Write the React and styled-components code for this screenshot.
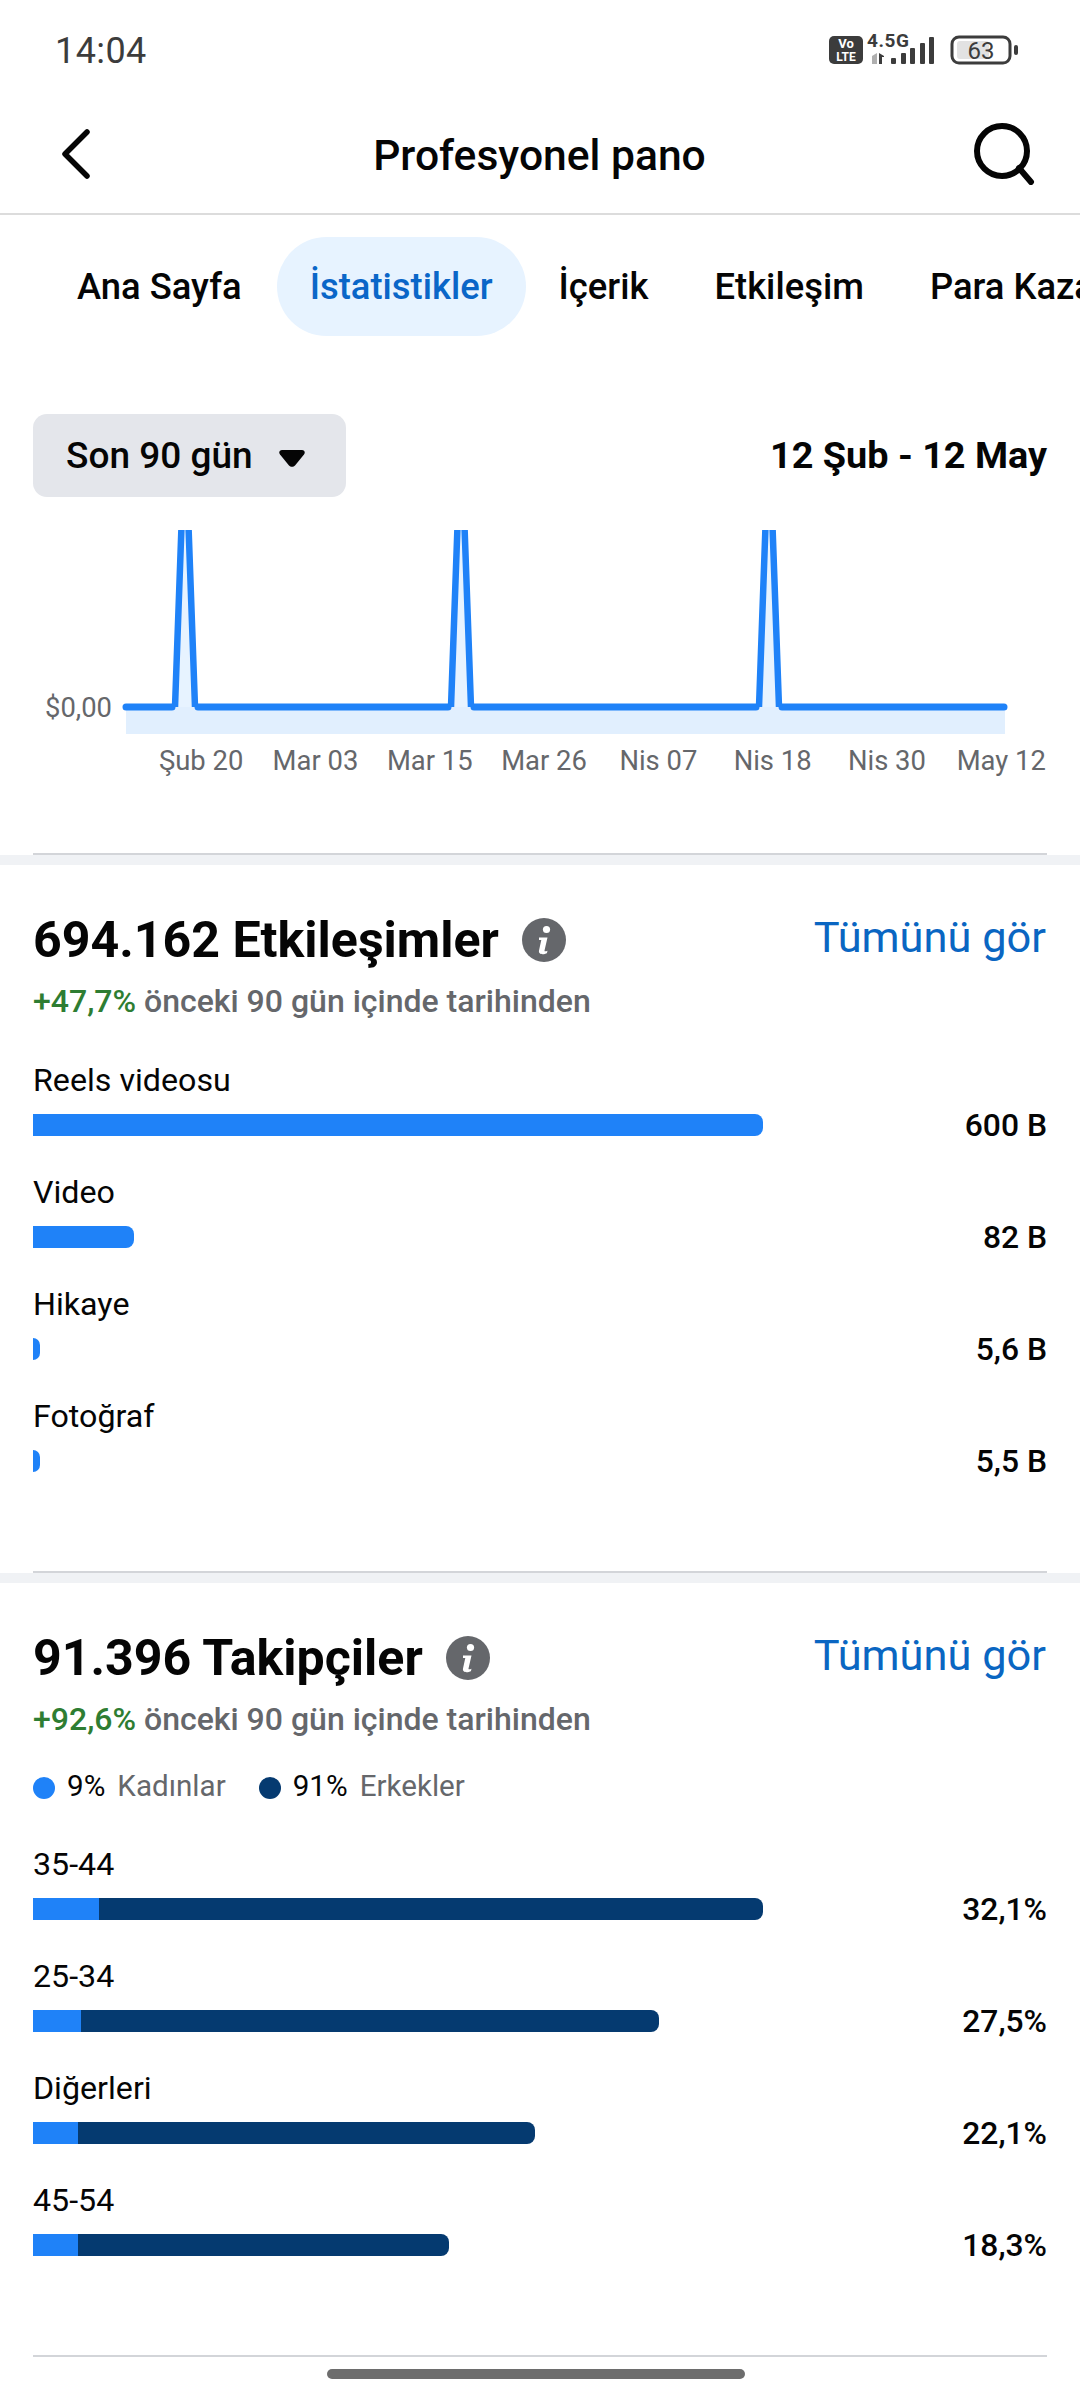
import React from 'react';
import styled, { createGlobalStyle } from 'styled-components';

const GlobalStyle = createGlobalStyle`
  html, body { margin: 0; padding: 0; background: #fff; }
  body { font-family: Roboto, "Noto Sans", sans-serif; color: #050505; }
`

const Page = styled.div`
  width: 1080px;
  height: 2400px;
  overflow: hidden;
  background: #fff;
`
const StatusBar = styled.div`
  height: 94px;
  box-sizing: border-box;
  padding: 0 60px 0 55px;
  display: flex;
  justify-content: space-between;
  align-items: flex-start;
`
const Time = styled.span`
  font-size: 36px;
  line-height: 42px;
  margin-top: 30px;
  letter-spacing: 0.4px;
  color: #3c3c3c;
`
const StatusIcons = styled.div`
  display: flex;
  margin-top: 30px;
`
const Header = styled.div`
  height: 121px;
  box-sizing: border-box;
  border-bottom: 2px solid #dcdcdc;
  padding: 0 44px 0 56px;
  display: flex;
  justify-content: space-between;
  align-items: center;
`
const HeaderTitle = styled.h1`
  margin: 3px 0 0 15px;
  font-size: 42.6px;
  font-weight: 500;
  line-height: 48px;
  color: #050505;
`
const Tabs = styled.div`
  display: flex;
  padding: 22px 0 0 44px;
  overflow: hidden;
  white-space: nowrap;
`
const Tab = styled.div`
  flex: none;
  height: 99px;
  line-height: 99px;
  padding: 0 33px;
  margin-right: ${p => (p.$first ? '2px' : '0')};
  border-radius: 50px;
  font-size: 36.4px;
  font-weight: 500;
  background: ${p => (p.$active ? '#e7f3ff' : 'transparent')};
  color: ${p => (p.$active ? '#0a66c8' : '#050505')};
`
const RangeRow = styled.div`
  margin-top: 78px;
  padding: 0 33px;
  display: flex;
  justify-content: space-between;
  align-items: center;
`
const RangeButton = styled.div`
  width: 313px;
  height: 83px;
  box-sizing: border-box;
  padding-left: 33px;
  border-radius: 14px;
  background: #e4e6eb;
  display: flex;
  align-items: center;
  gap: 26px;
  font-size: 37px;
  font-weight: 500;
`
const Caret = styled.svg`
  display: block;
  margin-top: 5px;
`
const RangeDates = styled.span`
  font-size: 37.8px;
  font-weight: 700;
  margin-top: -2px;
`
const ChartSvg = styled.svg`
  display: block;
  margin-top: 33px;
`
const TickRow = styled.div`
  display: grid;
  grid-template-columns: repeat(8, 114.3px);
  padding-left: 144px;
  margin-top: 9px;
`
const Tick = styled.span`
  text-align: center;
  font-size: 27.4px;
  line-height: 36px;
  color: #65676b;
`
const ChartBlock = styled.section`
  padding-bottom: 74px;
`
const Rule = styled.div`
  height: 2px;
  margin: 0 33px;
  background: #d3d5d9;
`
const Band = styled.div`
  height: 10px;
  background: #f0f2f5;
`
const Section = styled.section`
  padding: 47px 33px 99px;
`
const TitleRow = styled.div`
  display: flex;
  align-items: flex-start;
`
const SectionTitle = styled.h2`
  margin: 0;
  font-size: 50.1px;
  font-weight: 700;
  line-height: 56px;
  color: #050505;
`
const InfoIcon = styled.svg`
  display: block;
  margin: 6px 0 0 23px;
`
const SeeAll = styled.a`
  margin: 2px 1px 0 auto;
  font-size: 43.4px;
  line-height: 48px;
  color: #0a66c2;
`
const Subtitle = styled.div`
  margin-top: 13px;
  font-size: 32px;
  font-weight: 500;
  line-height: 40px;
  color: #65676b;
`
const Growth = styled.span`
  color: #2e7d32;
`
const Legend = styled.div`
  margin-top: 27px;
  height: 39px;
  display: flex;
  gap: 33px;
  font-size: 29.6px;
  line-height: 40px;
`
const LegendItem = styled.div`
  display: flex;
  align-items: center;
`
const Dot = styled.span`
  width: 22px;
  height: 22px;
  border-radius: 50%;
  margin: 5px 12px 0 0;
  background: ${p => p.$color};
`
const LegendValue = styled.span`
  color: #050505;
  margin-right: 12px;
`
const LegendName = styled.span`
  color: #65676b;
`
const Rows = styled.div`
  margin-top: 38px;
  display: flex;
  flex-direction: column;
  gap: 35px;
`
const RowLabel = styled.div`
  font-size: 32.2px;
  line-height: 42px;
  margin-bottom: 13px;
`
const BarLine = styled.div`
  height: 22px;
  display: flex;
  justify-content: space-between;
  align-items: center;
`
const Bar = styled.div`
  height: 22px;
  display: flex;
  overflow: hidden;
  border-radius: 0 8px 8px 0;
  background: ${p => p.$color};
`
const BarPart = styled.div`
  height: 100%;
  background: ${p => p.$color};
`
const RowValue = styled.span`
  font-size: 31.8px;
  line-height: 22px;
  font-weight: 500;
`
const HomeIndicator = styled.div`
  width: 418px;
  height: 10px;
  margin: 12px 0 0 327px;
  border-radius: 5px;
  background: #6d6d6d;
`

const BLUE = '#1f82f8'
const NAVY = '#053a70'
const FULL_BAR = 730

const interactions = [
  { label: 'Reels videosu', value: '600 B', width: 1 },
  { label: 'Video', value: '82 B', width: 0.138 },
  { label: 'Hikaye', value: '5,6 B', width: 0.0096 },
  { label: 'Fotoğraf', value: '5,5 B', width: 0.0096 },
]
const followers = [
  { label: '35-44', value: '32,1%', width: 1, women: 66 },
  { label: '25-34', value: '27,5%', width: 0.858, women: 48 },
  { label: 'Diğerleri', value: '22,1%', width: 0.688, women: 45 },
  { label: '45-54', value: '18,3%', width: 0.57, women: 45 },
]
const ticks = ['Şub 20', 'Mar 03', 'Mar 15', 'Mar 26', 'Nis 07', 'Nis 18', 'Nis 30', 'May 12']
const tabs = ['Ana Sayfa', 'İstatistikler', 'İçerik', 'Etkileşim', 'Para Kazan']
const spikes = [185, 461, 769]

const NetworkGlyph = () => (
  <svg width="121" height="36" viewBox="0 0 121 36">
    <rect x="0" y="6" width="34" height="28" rx="5" fill="#3c3c3c" />
    <text x="17" y="18" textAnchor="middle" fontSize="13" fontWeight="700" fill="#fff" fontFamily="Roboto">Vo</text>
    <text x="17" y="31" textAnchor="middle" fontSize="12" fontWeight="700" fill="#fff" fontFamily="Roboto">LTE</text>
    <text x="38" y="17" fontSize="19" fontWeight="700" letterSpacing="0.6" fill="#3c3c3c" fontFamily="Roboto">4.5G</text>
    <path d="M43 26l5-3v11h-5z" fill="#b0b0b0" />
    <g fill="#3c3c3c">
      <path d="M50 23l5 3v1h-2v7h-3z" />
      <rect x="62" y="28" width="5" height="6" rx="1" />
      <rect x="72" y="23" width="5" height="11" rx="1" />
      <rect x="81" y="18" width="5" height="16" rx="1" />
      <rect x="91" y="13" width="5" height="21" rx="1" />
      <rect x="100" y="7" width="5" height="27" rx="1" />
    </g>
  </svg>
)

const BatteryGlyph = () => (
  <svg width="70" height="36" viewBox="0 0 70 36">
    <rect x="2" y="7" width="58" height="26" rx="7" fill="none" stroke="#3c3c3c" strokeWidth="3" />
    <rect x="7" y="11" width="32" height="18" rx="3" fill="#e2e2e2" />
    <rect x="64" y="15" width="4" height="10" rx="2" fill="#3c3c3c" />
    <text x="31" y="29" textAnchor="middle" fontSize="24" fill="#3c3c3c" fontFamily="Roboto">63</text>
  </svg>
)

const Info = () => (
  <InfoIcon width="44" height="44" viewBox="0 0 44 44">
    <circle cx="22" cy="22" r="22" fill="#65676b" />
    <circle cx="24.5" cy="11.5" r="3.6" fill="#fff" />
    <path d="M17 19.5h8.500l-3 13c-.2 1 .8 1.200 3 .2l-.6 2.500c-2.500 1.200-8.800 2.100-7.900-2.600l2.300-10.500H17z" fill="#fff" />
  </InfoIcon>
)

const Chart = () => (
  <ChartSvg width="1080" height="204" viewBox="0 0 1080 204">
    <rect x="126" y="177" width="879" height="27" fill="#e1effe" />
    {spikes.map(x => (
      <path key={x} d={`M${x - 10} 177L${x - 3} 0H${x + 3}L${x + 10} 177Z`} fill="#e7f3ff" />
    ))}
    <text x="112" y="187" textAnchor="end" fontSize="27.4" fill="#65676b" fontFamily="Roboto">$0,00</text>
    <g stroke={BLUE} strokeWidth="7" strokeLinecap="round" fill="none">
      <path d="M126 177H172M198 177H448M474 177H756M782 177H1004" />
    </g>
    <g stroke={BLUE} strokeWidth="6.5" fill="none">
      {spikes.map(x => (
        <path key={x} d={`M${x - 10} 177L${x - 3.5} -4M${x + 3.5} -4L${x + 10} 177`} />
      ))}
    </g>
  </ChartSvg>
)

const App = () => (
  <Page>
    <GlobalStyle />
    <StatusBar>
      <Time>14:04</Time>
      <StatusIcons>
        <NetworkGlyph />
        <BatteryGlyph />
      </StatusIcons>
    </StatusBar>
    <Header>
      <svg width="36" height="54" viewBox="0 0 36 54">
        <path d="M31 5L9 27l22 22" fill="none" stroke="#050505" strokeWidth="5.500" strokeLinecap="round" strokeLinejoin="round" />
      </svg>
      <HeaderTitle>Profesyonel pano</HeaderTitle>
      <svg width="64" height="62" viewBox="0 0 64 62">
        <circle cx="30" cy="28" r="25" fill="none" stroke="#050505" strokeWidth="6" />
        <path d="M47 45l12 14" fill="none" stroke="#050505" strokeWidth="6" strokeLinecap="round" />
      </svg>
    </Header>
    <Tabs>
      {tabs.map((tab, i) => (
        <Tab key={tab} $first={i === 0} $active={i === 1}>{tab}</Tab>
      ))}
    </Tabs>
    <ChartBlock>
      <RangeRow>
        <RangeButton>
          Son 90 gün
          <Caret width="26" height="17" viewBox="0 0 26 17">
            <path d="M3 0h20c2.500 0 3.500 2.500 2 4.500l-9 11c-1.500 1.800-4.500 1.800-6 0L1 4.500C-.5 2.500.5 0 3 0z" fill="#050505" />
          </Caret>
        </RangeButton>
        <RangeDates>12 Şub - 12 May</RangeDates>
      </RangeRow>
      <Chart />
      <TickRow>
        {ticks.map(t => <Tick key={t}>{t}</Tick>)}
      </TickRow>
    </ChartBlock>
    <Rule />
    <Band />
    <Section>
      <TitleRow>
        <SectionTitle>694.162 Etkileşimler</SectionTitle>
        <Info />
        <SeeAll>Tümünü gör</SeeAll>
      </TitleRow>
      <Subtitle><Growth>+47,7%</Growth> önceki 90 gün içinde tarihinden</Subtitle>
      <Rows>
        {interactions.map(row => (
          <div key={row.label}>
            <RowLabel>{row.label}</RowLabel>
            <BarLine>
              <Bar $color={BLUE} style={{ width: row.width * FULL_BAR }} />
              <RowValue>{row.value}</RowValue>
            </BarLine>
          </div>
        ))}
      </Rows>
    </Section>
    <Rule />
    <Band />
    <Section>
      <TitleRow>
        <SectionTitle>91.396 Takipçiler</SectionTitle>
        <Info />
        <SeeAll>Tümünü gör</SeeAll>
      </TitleRow>
      <Subtitle><Growth>+92,6%</Growth> önceki 90 gün içinde tarihinden</Subtitle>
      <Legend>
        <LegendItem><Dot $color={BLUE} /><LegendValue>9%</LegendValue><LegendName>Kadınlar</LegendName></LegendItem>
        <LegendItem><Dot $color={NAVY} /><LegendValue>91%</LegendValue><LegendName>Erkekler</LegendName></LegendItem>
      </Legend>
      <Rows>
        {followers.map(row => (
          <div key={row.label}>
            <RowLabel>{row.label}</RowLabel>
            <BarLine>
              <Bar $color={NAVY} style={{ width: row.width * FULL_BAR }}>
                <BarPart $color={BLUE} style={{ width: row.women }} />
              </Bar>
              <RowValue>{row.value}</RowValue>
            </BarLine>
          </div>
        ))}
      </Rows>
    </Section>
    <Rule />
    <HomeIndicator />
  </Page>
);

export default App;
